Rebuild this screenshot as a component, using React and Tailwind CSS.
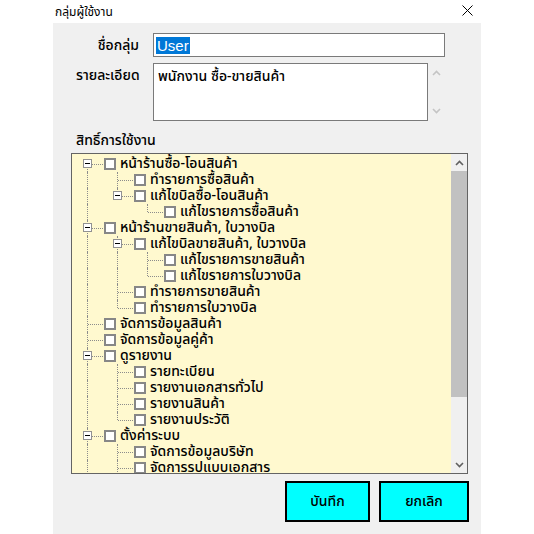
import React from "react";

const font = "font-['Tahoma','Microsoft_Sans_Serif','Noto_Sans_Thai','Noto_Sans','DejaVu_Sans',sans-serif]";

// level, label, expandable
const permissions = [
    [0, "หน้าร้านซื้อ-โอนสินค้า", true],
    [1, "ทำรายการซื้อสินค้า"],
    [1, "แก้ไขบิลซื้อ-โอนสินค้า", true],
    [2, "แก้ไขรายการซื้อสินค้า"],
    [0, "หน้าร้านขายสินค้า, ใบวางบิล", true],
    [1, "แก้ไขบิลขายสินค้า, ใบวางบิล", true],
    [2, "แก้ไขรายการขายสินค้า"],
    [2, "แก้ไขรายการใบวางบิล"],
    [1, "ทำรายการขายสินค้า"],
    [1, "ทำรายการใบวางบิล"],
    [0, "จัดการข้อมูลสินค้า"],
    [0, "จัดการข้อมูลคู่ค้า"],
    [0, "ดูรายงาน", true],
    [1, "รายทะเบียน"],
    [1, "รายงานเอกสารทั่วไป"],
    [1, "รายงานสินค้า"],
    [1, "รายงานประวัติ"],
    [0, "ตั้งค่าระบบ", true],
    [1, "จัดการข้อมูลบริษัท"],
    [1, "จัดการรูปแบบเอกสาร"],
    [1, "กำหนดผู้ใช้งาน"],
    [0, "สำรองข้อมูล"],
];

// rows that fit in the list before it needs scrolling
const VISIBLE_ROWS = 20;

// does the item at index i have a later sibling at the same level?
const hasNextSibling = (i) => {
    const lvl = permissions[i][0];
    for (let j = i + 1; j < permissions.length; j++) {
        if (permissions[j][0] < lvl) return false;
        if (permissions[j][0] === lvl) return true;
    }
    return false;
};

// nearest ancestor index at a given level
const ancestorAt = (i, lvl) => {
    for (let j = i - 1; j >= 0; j--) {
        if (permissions[j][0] === lvl) return j;
    }
    return -1;
};

const VLine = ({ top, bottom }) => (
    <span
        className="absolute left-[15px] w-0 border-l border-dotted border-[#8c8c8c]"
        style={{ top, bottom }}
    />
);

const TreeRow = ({ index }) => {
    const [level, label, expandable] = permissions[index];
    const guides = [];
    for (let k = 0; k < level; k++) {
        const a = ancestorAt(index, k);
        guides.push(a >= 0 && hasNextSibling(a));
    }
    const isFirst = index === 0;
    const more = hasNextSibling(index);

    return (
        <div className="flex h-[16px] items-start">
            {guides.map((on, k) => (
                <div key={k} className="relative w-[30px] h-full shrink-0">
                    {on && <VLine top={0} bottom={0} />}
                </div>
            ))}
            <div className="relative w-[32px] h-full shrink-0">
                {!isFirst && <VLine top={0} bottom={more ? 0 : 8} />}
                {isFirst && more && <VLine top={8} bottom={0} />}
                <span className="absolute left-[16px] right-[1px] top-[8px] h-0 border-t border-dotted border-[#8c8c8c]" />
                {expandable && (
                    <span className="absolute left-[11px] top-[3px] w-[9px] h-[9px] border border-[#919191] bg-white flex items-center justify-center">
                        <span className="w-[5px] h-px bg-black" />
                    </span>
                )}
            </div>
            <span className="mt-[2px] w-[12px] h-[12px] shrink-0 border-2 border-[#878787] bg-white" />
            <span className="ml-[4px] text-[14px] leading-[16px] font-medium text-black whitespace-nowrap">
                {label}
            </span>
        </div>
    );
};

const Chevron = ({ down, color }) => (
    <svg width="9" height="6" viewBox="0 0 9 6" className="block">
        <path
            d={down ? "M1 1 L4.5 4.5 L8 1" : "M1 5 L4.5 1.5 L8 5"}
            fill="none"
            stroke={color}
            strokeWidth="1.6"
        />
    </svg>
);

export default function App() {
    return (
        <div className={`w-[534px] h-[534px] bg-white flex flex-col overflow-hidden ${font}`}>
            {/* title bar */}
            <div className="h-[23px] shrink-0 flex items-center pl-[55px] pr-[61px]">
                <span className="text-[12px] text-black">กลุ่มผู้ใช้งาน</span>
                <svg width="11" height="11" viewBox="0 0 11 11" className="ml-auto mb-[3px]">
                    <path d="M0.5 0.5 L10.5 10.5 M10.5 0.5 L0.5 10.5" stroke="#000" strokeWidth="1" />
                </svg>
            </div>

            <div className="ml-[53px] w-[428px] flex-1 bg-[#f0f0f0] pl-[18px] pt-[10px]">
                {/* group name */}
                <div className="flex items-center">
                    <label className="w-[68px] text-right text-[14px] font-medium text-black">ชื่อกลุ่ม</label>
                    <div className="ml-[14px] w-[292px] h-[24px] border border-[#7a7a7a] bg-white flex items-center pl-[2px]">
                        <span className="bg-[#0078d7] text-white text-[15px] leading-[17px] font-['Liberation_Sans',sans-serif] px-px">
                            User
                        </span>
                    </div>
                </div>

                {/* description */}
                <div className="flex mt-[6px]">
                    <label className="w-[66px] mt-[2px] text-left pl-[5px] text-[14px] font-medium text-black whitespace-nowrap">
                        รายละเอียด
                    </label>
                    <div className="ml-[16px] w-[275px] h-[58px] border border-[#7a7a7a] bg-white px-[4px] pt-[2px] text-[14px] font-medium text-black">
                        พนักงาน ซื้อ-ขายสินค้า
                    </div>
                    <div className="w-[17px] h-[58px] flex flex-col items-center justify-between py-[7px]">
                        <Chevron color="#c4c4c4" />
                        <Chevron down color="#c4c4c4" />
                    </div>
                </div>

                {/* permissions */}
                <div className="mt-[9px] pl-[5px] text-[14px] font-medium text-black">สิทธิ์การใช้งาน</div>
                <div className="mt-[2px] w-[397px] h-[321px] border border-[#646464] bg-[#fff9cf] flex overflow-hidden">
                    <div className="flex-1 pt-[2px] overflow-hidden">
                        {permissions.slice(0, VISIBLE_ROWS).map((_, i) => (
                            <TreeRow key={i} index={i} />
                        ))}
                    </div>
                    <div className="w-[16px] shrink-0 bg-[#f0f0f0] flex flex-col">
                        <div className="h-[17px] flex items-center justify-center">
                            <Chevron color="#606060" />
                        </div>
                        <div className="h-[226px] bg-[#c1c1c1]" />
                        <div className="flex-1" />
                        <div className="h-[17px] flex items-center justify-center">
                            <Chevron down color="#606060" />
                        </div>
                    </div>
                </div>

                {/* actions */}
                <div className="flex justify-end gap-[9px] mt-[7px] pr-[12px]">
                    <button className="w-[85px] h-[41px] bg-[#00ffff] border-2 border-black text-[14px] font-medium text-black">
                        บันทึก
                    </button>
                    <button className="w-[90px] h-[41px] bg-[#00ffff] border-2 border-black text-[14px] font-medium text-black">
                        ยกเลิก
                    </button>
                </div>
            </div>
        </div>
    );
}
